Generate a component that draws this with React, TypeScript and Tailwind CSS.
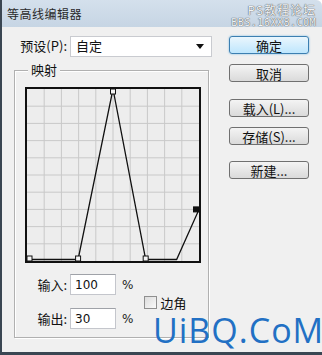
import React from "react";

const buttons = [
	{ label: "确定", mt: "mt-[9px]", primary: true },
	{ label: "取消", mt: "mt-[10px]" },
	{ label: "载入(L)...", mt: "mt-[17px]" },
	{ label: "存储(S)...", mt: "mt-[10px]" },
	{ label: "新建...", mt: "mt-[16px]" },
];

// curve points, x/y in 0..1 (y up)
const points = [
	{ x: 0, y: 0 },
	{ x: 0.297, y: 0 },
	{ x: 0.5, y: 1 },
	{ x: 0.69, y: 0 },
	{ x: 1, y: 0.3, selected: true },
];
const line: [number, number][] = [
	[0, 0],
	[0.297, 0],
	[0.5, 1],
	[0.69, 0],
	[0.87, 0],
	[1, 0.3],
];

const S = 172;

const CurveGraph = () => {
	const grid = Array.from({ length: 9 }, (_, i) => ((i + 1) * S) / 10);
	const px = (x: number) => x * S;
	const py = (y: number) => S - y * S;
	return (
		<div className="w-[176px] h-[176px] border-2 border-[#111] bg-[#ededed]">
			<svg width={S} height={S} viewBox={`0 0 ${S} ${S}`} className="block">
				{grid.map((g) => (
					<g key={g}>
						<line x1={g} y1={0} x2={g} y2={S} stroke="#c9c9c9" strokeWidth="1" />
						<line x1={0} y1={g} x2={S} y2={g} stroke="#c9c9c9" strokeWidth="1" />
					</g>
				))}
				<polyline
					points={line.map(([x, y]) => `${px(x)},${Math.min(py(y), S - 1.5)}`).join(" ")}
					fill="none"
					stroke="#111"
					strokeWidth="1.3"
				/>
				{points.map((p, i) => {
					const cx = Math.min(Math.max(px(p.x), 2.5), S - 3);
					const cy = Math.min(Math.max(py(p.y), 2.5), S - 2.5);
					return (
						<rect
							key={i}
							x={cx - 2.5}
							y={cy - 2.5}
							width="5"
							height="5"
							fill={p.selected ? "#111" : "#f4f4f4"}
							stroke="#111"
							strokeWidth="1"
						/>
					);
				})}
			</svg>
		</div>
	);
};

const NumField = ({ label, value }: { label: string; value: string }) => (
	<div className="flex items-center h-[21px]">
		<span className="w-[56px] text-right pr-[3px] text-[13px] text-[#111]">{label}</span>
		<div className="w-[46px] h-[21px] bg-white border border-[#c4c6cc] border-t-[#9fa2a8] flex items-center pl-[4px] text-[12px] text-[#111] font-['DejaVu_Sans',sans-serif]">
			{value}
		</div>
		<span className="ml-[6px] text-[12px] text-[#222] font-['DejaVu_Sans',sans-serif]">%</span>
	</div>
);

export default function App() {
	return (
		<div className="relative w-[322px] h-[355px] overflow-hidden bg-[#f0f0f0] border-l-2 border-b-[3px] border-[#3a4652] rounded-tr-[6px] font-['Noto_Sans_CJK_SC',sans-serif] text-[#111]">
			<div className="h-[27px] flex items-center pl-[5px] bg-gradient-to-b from-[#d4e0ec] to-[#c6d5e4]">
				<span className="text-[12px] text-[#2a2a2a] tracking-[0.5px]">等高线编辑器</span>
			</div>

			<div className="absolute right-[6px] top-[2px] flex flex-col items-end text-[#eef2f6] [text-shadow:0_0_1px_#555,0_0_1px_#555]">
				<span className="text-[12px] leading-[15px] tracking-[1px]">PS教程论坛</span>
				<span className="text-[10px] leading-[11px] font-['DejaVu_Sans_Mono',monospace] tracking-[0.5px]">BBS.16XX8.COM</span>
			</div>

			<div className="flex">
				<div className="pl-[12px]">
					<div className="flex items-center h-[20px] mt-[9px]">
						<span className="w-[56px] text-right pr-[3px] text-[13px]">预设(P):</span>
						<div className="w-[142px] h-[21px] bg-white border border-[#c9cbd0] flex items-center justify-between pl-[5px] pr-[7px]">
							<span className="text-[13px]">自定</span>
							<svg width="8" height="5" viewBox="0 0 8 5">
								<path d="M0 0 L8 0 L4 5 Z" fill="#111" />
							</svg>
						</div>
					</div>

					<div className="relative mt-[14px] w-[195px] h-[268px] border border-[#b0b0b0] shadow-[inset_1px_1px_0_#fff,1px_1px_0_#fff]">
						<span className="absolute -top-[10px] left-[13px] px-[3px] bg-[#f0f0f0] text-[13px] leading-[18px]">映射</span>
						<div className="ml-[10px] mt-[16px]">
							<CurveGraph />
						</div>
						<div className="flex items-center mt-[11px] -ml-[1px]">
							<div className="flex flex-col gap-[13px]">
								<NumField label="输入:" value="100" />
								<NumField label="输出:" value="30" />
							</div>
							<div className="flex items-center ml-[11px] mt-[1px]">
								<div className="w-[13px] h-[13px] border border-[#8f8f8f] bg-gradient-to-br from-[#dcdcdc] to-[#fafafa]" />
								<span className="ml-[3px] text-[13px] leading-[15px]">边角</span>
							</div>
						</div>
					</div>
				</div>

				<div className="ml-auto mr-[13px] flex flex-col">
					{buttons.map((b) => (
						<button
							key={b.label}
							className={`${b.mt} w-[80px] h-[18px] rounded-[3px] flex items-center justify-center text-[13px] leading-none text-[#111] ${
								b.primary
									? "border border-[#3c7fb1] bg-gradient-to-b from-[#eaf6fd] to-[#bee6fd] shadow-[0_0_2px_#6bb3e0]"
									: "border border-[#707070] bg-gradient-to-b from-[#f4f4f4] to-[#dadada]"
							}`}
						>
							{b.label}
						</button>
					))}
				</div>
			</div>

			<div className="absolute left-[151px] top-[316px] text-[34px] leading-[28px] text-[#2270c4] font-['Open_Sans',sans-serif] tracking-[1px]">
				UiBQ.CoM
			</div>
		</div>
	);
}
